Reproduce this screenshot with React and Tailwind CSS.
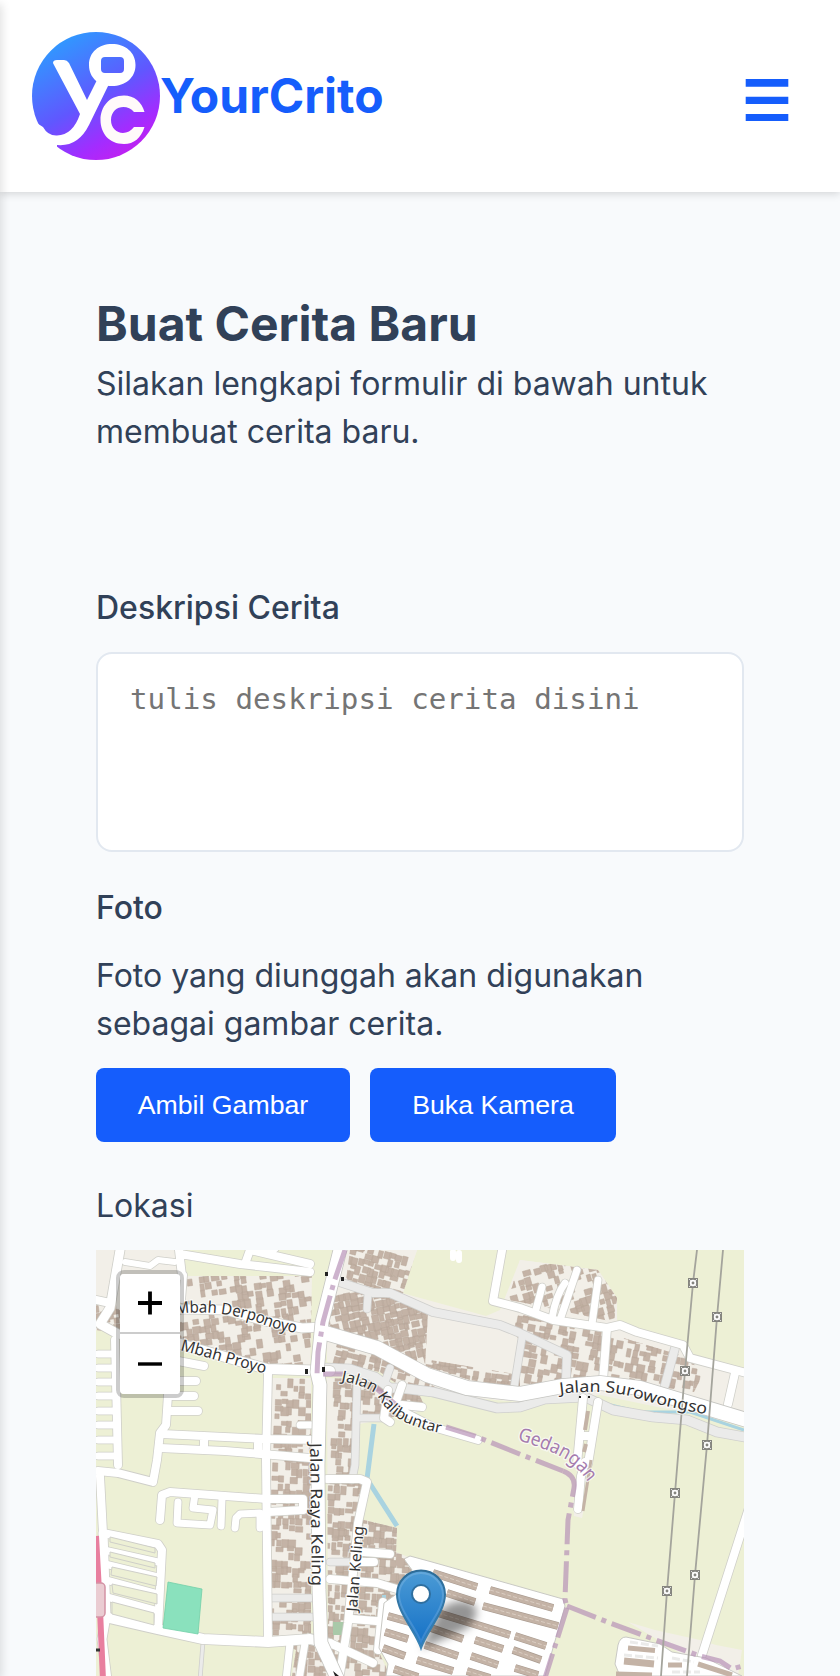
import React from "react";

const LAND = "#edf0d5";
const URBAN = "#f2efe8";
const BROWN = "#c4b3a6";

// Built-up blocks: outline and the slope of their buildings.
const blocks = [
  { id: "nw", pts: "96,1250 180,1250 186,1276 312,1276 310,1376 268,1366 180,1344 96,1330", rot: -8, seed: 3, fill: 0.5, x: 96, y: 1276, w: 220, h: 100 },
  { id: "keling", pts: "270,1378 311,1378 311,1640 330,1676 292,1676 296,1650 272,1640", rot: 2, seed: 8, fill: 0.62, x: 270, y: 1378, w: 60, h: 298 },
  { id: "mid", pts: "327,1378 380,1380 420,1396 426,1410 360,1424 354,1480 365,1484 360,1519 397,1528 396,1552 420,1562 405,1590 383,1606 378,1650 390,1676 334,1676 328,1640", rot: 3, seed: 14, fill: 0.7, x: 326, y: 1376, w: 100, h: 300 },
  { id: "north", pts: "350,1250 417,1250 402,1296 346,1280", rot: 15, seed: 5, fill: 0.78, x: 342, y: 1250, w: 78, h: 50 },
  { id: "north2", pts: "336,1288 400,1300 428,1312 425,1366 380,1342 328,1326", rot: -12, seed: 25, fill: 0.82, x: 326, y: 1286, w: 110, h: 84 },
  { id: "south", pts: "327,1341 375,1352 420,1378 440,1390 400,1386 380,1372 327,1362", rot: 14, seed: 33, fill: 0.6, x: 326, y: 1340, w: 120, h: 55 },
  { id: "row", pts: "418,1358 520,1375 520,1388 470,1380 425,1366", rot: 8, seed: 34, fill: 0.85, x: 418, y: 1355, w: 110, h: 36 },
  { id: "ne", pts: "520,1260 598,1270 617,1298 614,1322 520,1302 508,1300", rot: -16, seed: 19, fill: 0.58, x: 510, y: 1260, w: 110, h: 64 },
  { id: "ne2", pts: "500,1310 610,1334 690,1358 702,1376 694,1392 640,1384 520,1386 519,1340", rot: 10, seed: 41, fill: 0.5, x: 500, y: 1308, w: 200, h: 86 },
];

function random(seed) {
  let s = seed * 9301 + 49297;
  return () => {
    s = (s * 16807) % 2147483647;
    return s / 2147483647;
  };
}

function buildings(b) {
  const r = random(b.seed);
  let d = "";
  for (let y = b.y; y < b.y + b.h; y += 7) {
    for (let x = b.x; x < b.x + b.w; x += 6) {
      if (r() < b.fill) {
        const w = 4 + r() * 4;
        const h = 4 + r() * 5;
        d += `M${(x + r() * 2).toFixed(1)} ${(y + r() * 2).toFixed(1)}h${w.toFixed(1)}v${h.toFixed(1)}h-${w.toFixed(1)}z`;
      }
    }
  }
  return d;
}

// [path, width]
const greyRoads = [
  ["M336 1281L373 1293 390 1293 433 1312 500 1325 520 1333 567 1355 566 1380", 8],
  ["M368 1294L367 1309", 7],
  ["M522 1338L514 1388", 7],
  ["M400 1388L433 1392 497 1408 520 1407 545 1399 585 1397 613 1410 653 1417 687 1420 717 1432 750 1438", 9],
  ["M326 1368L350 1369 375 1377 390 1388 402 1388", 9],
  ["M390 1368L385 1382", 7],
  ["M357 1385L355 1465 352 1480", 7],
  ["M360 1418L382 1418", 7],
  ["M675 1348L665 1385", 8],
  ["M272 1598H316M272 1617H316M330 1562H350", 7],
  ["M203 1642L200 1680", 3],
];
const whiteRoads = [
  ["M120 1250L110 1308 100 1324 118 1334 182 1344", 9],
  ["M125 1262L150 1266 158 1260 175 1262", 6],
  ["M179 1250L182 1276M180 1254L240 1264 310 1272", 8],
  ["M245 1264L250 1250 310 1264M268 1254L275 1248", 8],
  ["M182 1300L184 1275", 6],
  ["M96 1300L110 1303", 8],
  ["M180 1309L225 1310 265 1321 302 1328 325 1327", 9],
  ["M180 1344L267 1369 330 1371", 10],
  ["M115 1340L118 1465", 8],
  ["M98 1354H113M98 1368H113M98 1382H113M98 1396H113M98 1411H113M98 1425H113M98 1440H113M98 1456H113", 7],
  ["M173 1360L204 1366M168 1381H196M168 1396H194M168 1411H198", 8],
  ["M168 1375L168 1395 166 1425 160 1433 157 1460 153 1482 118 1473 98 1471", 8],
  ["M162 1434L267 1439 320 1440M160 1448L225 1451 310 1458M204 1438V1450M258 1441V1453", 8],
  ["M268 1373L266 1460 268 1640", 8],
  ["M300 1425H316", 7],
  ["M160 1520L162 1495 170 1492 267 1499 303 1499 303 1510 268 1512", 8],
  ["M178 1502L177 1523 210 1525 213 1510 193 1508 195 1494", 7],
  ["M222 1499L221 1526M260 1513L240 1514 236 1518 235 1528M260 1513L260 1528", 7],
  ["M100 1476L103 1533 158 1544 162 1550 158 1628", 8],
  ["M103 1533L106 1616 102 1639 107 1680", 9],
  ["M104 1550L158 1562M105 1564L158 1577M106 1580L158 1594M107 1597L158 1611", 7],
  ["M105 1617L157 1629 203 1639 268 1642 310 1639 330 1644", 10],
  ["M290 1643L286 1680M305 1643L299 1680", 7],
  ["M503 1245L493 1301 520 1308 553 1320 607 1328 620 1325 637 1332 683 1345 690 1358 750 1374", 8],
  ["M542 1287L535 1313M565 1283Q556 1295 552 1318M577 1270L560 1320M598 1280L592 1324", 7],
  ["M607 1328L603 1380M735 1373L728 1404", 8],
  ["M583 1398L577 1464M598 1402L588 1464M580 1436H592M585 1462L581 1476 578 1509", 8],
  ["M388 1390L384 1418 390 1422M402 1385L396 1402M386 1403L433 1427 478 1440M402 1405L422 1407", 8],
  ["M327 1479L360 1479 367 1482 358 1523 348 1623 339 1680", 8],
  ["M363 1552L390 1554M358 1562H374M330 1579L377 1583 400 1590M352 1619L376 1621M330 1643L373 1663M383 1602L378 1650", 8],
  ["M756 1486L702 1655", 8],
];
const mainRoads = [
  ["M322 1332L377 1348 427 1375 467 1388 520 1394 563 1386 600 1383 640 1388 750 1421", 14],
  ["M341 1246L332 1282 322 1322 317 1372 320 1385 318 1465 319 1590 321 1643 338 1680", 13],
];

const slots = [
  "110,1537 155,1548 155,1553 110,1542", "110,1552 155,1563 155,1568 110,1557",
  "112,1567 157,1577 156,1586 111,1575", "112,1584 157,1594 157,1604 113,1593", "112,1602 154,1613 154,1625 112,1614",
];

const terraces = [
  [433, 1573, 477, 1587], [490, 1590, 553, 1608], [447, 1593, 475, 1602], [483, 1606, 558, 1626], [438, 1613, 510, 1635],
  [428, 1627, 463, 1639], [475, 1640, 503, 1649], [515, 1636, 546, 1646], [425, 1645, 458, 1656], [471, 1656, 498, 1665],
  [513, 1650, 541, 1660], [417, 1660, 453, 1671], [467, 1671, 490, 1678], [515, 1668, 538, 1675], [388, 1616, 413, 1623],
  [385, 1632, 408, 1639], [383, 1648, 405, 1656], [394, 1669, 418, 1677],
];

const pylons = [[693, 1283], [717, 1317], [685, 1371], [707, 1445], [675, 1493], [667, 1591], [695, 1575]];

function Roads({ list, casing, fill }) {
  return (
    <g fill="none" strokeLinejoin="round" strokeLinecap="round">
      {list.map(([d, w]) => <path key={d} d={d} stroke={casing} strokeWidth={w + 1.6} />)}
      {list.map(([d, w]) => <path key={d} d={d} stroke={fill} strokeWidth={w} />)}
    </g>
  );
}

function Label({ id, d, length, size = 16, color = "#333", children }) {
  return (
    <>
      <path id={id} d={d} fill="none" />
      <text fontSize={size} fill={color} stroke="#fff" strokeOpacity="0.7" strokeWidth="2.5" paintOrder="stroke" strokeLinejoin="round" textLength={length} lengthAdjust="spacingAndGlyphs">
        <textPath href={`#${id}`} textLength={length} lengthAdjust="spacingAndGlyphs">{children}</textPath>
      </text>
    </>
  );
}

function MapDrawing() {
  return (
    <svg viewBox="96 1250 648 426" className="block h-[426px] w-[648px] font-['Noto_Sans',sans-serif]">
      <defs>
        {blocks.map((b) => <clipPath key={b.id} id={`clip-${b.id}`}><polygon points={b.pts} /></clipPath>)}
        <linearGradient id="pin" x1="0" y1="0" x2="0" y2="1">
          <stop offset="0" stopColor="#4c9bd5" />
          <stop offset="1" stopColor="#126fc6" />
        </linearGradient>
        <linearGradient id="pin-edge" x1="0" y1="0" x2="0" y2="1">
          <stop offset="0" stopColor="#2e6c97" />
          <stop offset="1" stopColor="#3883b7" />
        </linearGradient>
        <filter id="soft" x="-30%" y="-30%" width="160%" height="160%"><feGaussianBlur stdDeviation="4" /></filter>
      </defs>
      <rect x="96" y="1250" width="648" height="426" fill={LAND} />
      <g fill={URBAN}>
        <polygon points="335,1250 417,1250 402,1293 486,1316 500,1310 520,1260 598,1270 617,1298 617,1322 683,1345 692,1358 744,1372 744,1425 600,1395 520,1402 440,1395 320,1345" />
        <polygon points="628,1622 655,1630 700,1640 716,1645 742,1650 738,1676 700,1665" />
        <polygon points="573,1500 584,1508 582,1518 574,1516" />
        {blocks.map((b) => <polygon key={b.id} points={b.pts} />)}
      </g>
      {blocks.map((b) => (
        <g key={b.id} clipPath={`url(#clip-${b.id})`}>
          <path d={buildings(b)} fill={BROWN} stroke="#b9a89b" strokeWidth="0.5" transform={`rotate(${b.rot} ${b.x + b.w / 2} ${b.y + b.h / 2})`} />
        </g>
      ))}
      <path d="M374 1424L367 1479 397 1526" fill="none" stroke="#a9d3e0" strokeWidth="5" />
      <path d="M384 1595V1603" stroke="#a9d3e0" strokeWidth="4" />
      <rect x="333" y="1622" width="11" height="13" fill="#a9c9a9" />
      <path d="M598 1402L640 1412 690 1412 744 1430" fill="none" stroke="#a9d3e0" strokeWidth="3" />

      <Roads list={greyRoads} casing="#cfcfcd" fill="#ebebea" />
      <Roads list={whiteRoads} casing="#cfcfc9" fill="#fff" />
      <Roads list={mainRoads} casing="#c6c6c2" fill="#fff" />
      {slots.map((p) => <polygon key={p} points={p} fill={LAND} stroke="#cfcfc9" strokeWidth="1" />)}
      <polygon points="168,1582 202,1589 198,1634 163,1628" fill="#8ae1bd" stroke="#74cfa8" strokeWidth="0.8" />
      <path d="M453 1252V1258M459 1253V1260" stroke="#fff" strokeWidth="6" strokeLinecap="round" />
      <path d="M588 1411L585 1430M586 1444L584 1452" stroke={BROWN} strokeWidth="4" />
      <path d="M591 1460L583 1511" stroke={BROWN} strokeWidth="3" />

      <path d="M96 1536L100 1610 103 1680" fill="none" stroke="#e87f9f" strokeWidth="6" />
      <rect x="90" y="1583" width="15" height="34" rx="4" fill="#eaccd2" stroke="#d393a5" strokeWidth="1.5" />
      <path d="M96 1650H100" stroke="#333" strokeWidth="3" />

      <path d="M404 1559L410 1556 432 1562 563 1599 565 1606 545 1676 386 1676 388 1664 379 1648 384 1603 402 1590 412 1570Z" fill="#fff" stroke="#c9c9c4" />
      <g stroke="#a99b90" strokeWidth="8">
        {terraces.map((t) => <line key={t.join()} x1={t[0]} y1={t[1]} x2={t[2]} y2={t[3]} />)}
      </g>
      <g stroke={BROWN} strokeWidth="6.6">
        {terraces.map((t) => <line key={t.join()} x1={t[0]} y1={t[1]} x2={t[2]} y2={t[3]} />)}
      </g>
      <g stroke="#ddd0c5" strokeWidth="0.9" strokeDasharray="4 2">
        {terraces.map((t) => <line key={t.join()} x1={t[0]} y1={t[1]} x2={t[2]} y2={t[3]} />)}
      </g>
      <polygon points="397,1556 405,1559 402,1568 395,1565" fill={BROWN} />

      <path d="M626 1637Q620 1637 618 1645L615 1664 620 1676H742L706 1658 672 1652 660 1644Z" fill="#fff" stroke="#c9c9c4" />
      <path d="M630 1642L658 1646M624 1655L658 1658M672 1658L694 1662M672 1672H700" stroke="#ebebea" strokeWidth="3" strokeDasharray="8 3" />
      <path d="M628 1648L655 1650.500M668 1665H682M698 1664L732 1675" stroke={BROWN} strokeWidth="5" />
      <path d="M624 1661L654 1664M616 1675L652 1676" stroke={BROWN} strokeWidth="7" />

      <g fill="none" stroke="#b58fb5" strokeOpacity="0.68" strokeWidth="5" strokeDasharray="31 6 5 6">
        <path d="M345 1250L334 1282 323 1322 318 1352 317 1375" />
        <path d="M323 1374H343M376 1388L402 1410M446 1427L475 1436 517 1453 563 1471" />
        <path d="M563 1471Q576 1476 574 1488L568 1520 565 1599 567 1608" />
        <path d="M567 1608L545 1678" />
        <path d="M567 1606L610 1623 653 1639 700 1656 720 1661 732 1669 750 1664" />
      </g>
      <g fill="#222">
        <path d="M325 1272h3v4h-3zM341 1277h3v4h-3zM305 1369h3v5h-3zM322 1367h3v5h-3zM308 1510h4v4h-4zM333 1671l6 5h-4z" />
        <path d="M579 1396h2v2h-2zM588 1396h2v2h-2z" />
      </g>

      <g fill="none" stroke="#a4a49c" strokeWidth="1.8">
        <path d="M697 1250L693 1283 685 1371 675 1493 667 1591 661 1676" />
        <path d="M723 1250L717 1317 707 1445 695 1575 687 1676" />
      </g>
      {pylons.map(([x, y]) => (
        <g key={`${x}-${y}`}>
          <rect x={x - 5} y={y - 5} width="10" height="10" fill="#85857f" />
          <path d={`M${x - 4} ${y - 4}l2 2M${x + 4} ${y - 4}l-2 2M${x - 4} ${y + 4}l2-2M${x + 4} ${y + 4}l-2-2`} stroke="#ddd" />
          <circle cx={x} cy={y} r="2.3" fill="#85857f" stroke="#fff" strokeWidth="1.7" />
        </g>
      ))}

      <Label id="l-derp" d="M176 1314Q200 1311 222 1314 245 1317 262 1324T304 1334" length={123}>Mbah Derponoyo</Label>
      <Label id="l-proyo" d="M180 1350L270 1375" length={88}>Mbah Proyo</Label>
      <Label id="l-kali" d="M341 1381Q367 1386 377 1395 388 1415 407 1423T447 1434" length={116} size={15}>Jalan Kalibuntar</Label>
      <Label id="l-suro" d="M560 1394Q600 1389 630 1396 660 1406 710 1415" length={149}>Jalan Surowongso</Label>
      <Label id="l-raya" d="M310 1443L312 1590" length={143}>Jalan Raya Keling</Label>
      <Label id="l-kel" d="M357 1612L364 1522" length={86} size={15}>Jalan Keling</Label>
      <Label id="l-ged" d="M517 1440Q548 1449 565 1459 580 1469 592 1488" length={85} size={19} color="#a57cae">Gedangan</Label>

      <path d="M421 1649L437 1615Q448 1598 470 1602 485 1612 466 1629Z" fill="#000" fillOpacity="0.42" filter="url(#soft)" />
      <path d="M421 1648C416 1632 397 1612 397 1594.500A24 24 0 0 1 445 1594.500C445 1612 426 1632 421 1648Z" fill="url(#pin)" stroke="url(#pin-edge)" strokeWidth="2" />
      <path d="M421 1642C415 1626 399 1610 399 1595A22 22 0 0 1 443 1595C443 1610 427 1626 421 1642Z" fill="none" stroke="#fff" strokeOpacity="0.14" strokeWidth="2" />
      <circle cx="421" cy="1594" r="9" fill="#fff" stroke="#2f6f9f" strokeWidth="2" />
    </svg>
  );
}

function Logo() {
  return (
    <svg viewBox="0 0 128 128" className="size-32 shrink-0">
      <defs>
        <linearGradient id="logo" x1="0.2" y1="0.05" x2="0.75" y2="1">
          <stop offset="0" stopColor="#2e9bff" />
          <stop offset="0.5" stopColor="#6057ff" />
          <stop offset="0.8" stopColor="#a32cff" />
          <stop offset="1" stopColor="#c61fee" />
        </linearGradient>
      </defs>
      <circle cx="64" cy="64" r="64" fill="url(#logo)" />
      <path d="M21 31Q21 28 25 28L32 28Q35 28 37 31L55 68 65 48 77 52 57 93Q46 115 25 113L25 119 0 119 0 88 11 95Q16 104 25 103.500 41 103 48 82L22 33Z" fill="#fff" />
      <path fillRule="evenodd" d="M80 12C93 12 103.500 20 103.500 33S93 54 80 54 57 46 57 33 67 12 80 12ZM73 25Q69 25 69 29V37Q69 41 73 41H88Q92 41 92 37V29Q92 25 88 25Z" fill="#fff" />
      <path d="M112.500 80H102C95 71 79 74 79 88S95 105 102 95H112.500C109 106 102 112 92 112 77 112 68.500 101 68.500 88S77 63.500 92 63.500C102 63.500 110 70 112.500 80Z" fill="#fffafa" />
    </svg>
  );
}

export default function App() {
  return (
    <div className="relative h-[1676px] w-[840px] overflow-hidden bg-[#f8fafc] font-['Inter',sans-serif] text-[32px] leading-[48px] text-slate-700">
      <header className="flex h-48 items-center justify-between bg-white pr-[51px] pl-8 shadow-[0_2px_8px_rgba(0,0,0,0.15)]">
        <div className="flex items-center text-[48px] leading-[72px] font-bold text-blue-600">
          <Logo />
          <span>YourCrito</span>
        </div>
        <button aria-label="Menu" className="mt-2">
          <svg viewBox="0 0 44 44" className="block size-11 text-blue-600" fill="currentColor">
            <path d="M.7 1H43.300V8.700H.7ZM.7 18.700H43.300V26H.7ZM.7 36H43.300V43H.7Z" />
          </svg>
        </button>
      </header>

      <main className="px-24 pt-24">
        <h1 className="text-[48px] leading-[72px] font-bold">Buat Cerita Baru</h1>
        <p>Silakan lengkapi formulir di bawah untuk membuat cerita baru.</p>

        <form className="pt-32">
          <label className="block font-medium">Deskripsi Cerita</label>
          <textarea
            className="mt-5 block h-[200px] w-full resize-none rounded-2xl border-2 border-slate-200 bg-white px-8 pt-[26px] font-['DejaVu_Sans_Mono',monospace] text-[29.2px] leading-[38px] placeholder:text-[#757575]"
            placeholder="tulis deskripsi cerita disini"
          />
          <label className="mt-8 block font-medium">Foto</label>
          <p className="mt-5">Foto yang diunggah akan digunakan sebagai gambar cerita.</p>
          <div className="mt-5 flex gap-5 font-['Liberation_Sans',sans-serif] text-[26.67px] leading-[30px] text-white">
            <button type="button" className="h-[74px] w-[254px] rounded-lg bg-blue-600">Ambil Gambar</button>
            <button type="button" className="h-[74px] w-[246px] rounded-lg bg-blue-600">Buka Kamera</button>
          </div>
          <p className="mt-10">Lokasi</p>
          <div className="relative mt-5 h-[426px] overflow-hidden">
            <MapDrawing />
            <div className="absolute top-5 left-5 w-[68px] rounded-lg border-4 border-black/20 bg-clip-padding">
              <button type="button" aria-label="Zoom in" className="flex h-[60px] w-full items-center justify-center rounded-t border-b-2 border-[#ccc] bg-white">
                <svg viewBox="0 0 24 24" className="size-6 text-black" stroke="currentColor" strokeWidth="3.8"><path d="M0 12H24M12 .5V23.500" /></svg>
              </button>
              <button type="button" aria-label="Zoom out" className="flex h-[60px] w-full items-center justify-center rounded-b bg-white">
                <svg viewBox="0 0 24 24" className="size-6 text-black" stroke="currentColor" strokeWidth="3.400"><path d="M0 12H24" /></svg>
              </button>
            </div>
          </div>
        </form>
      </main>
      <div className="absolute top-0 -left-5 h-full w-5 shadow-[2px_4px_10px_rgba(0,0,0,0.12)]" />
    </div>
  );
}
